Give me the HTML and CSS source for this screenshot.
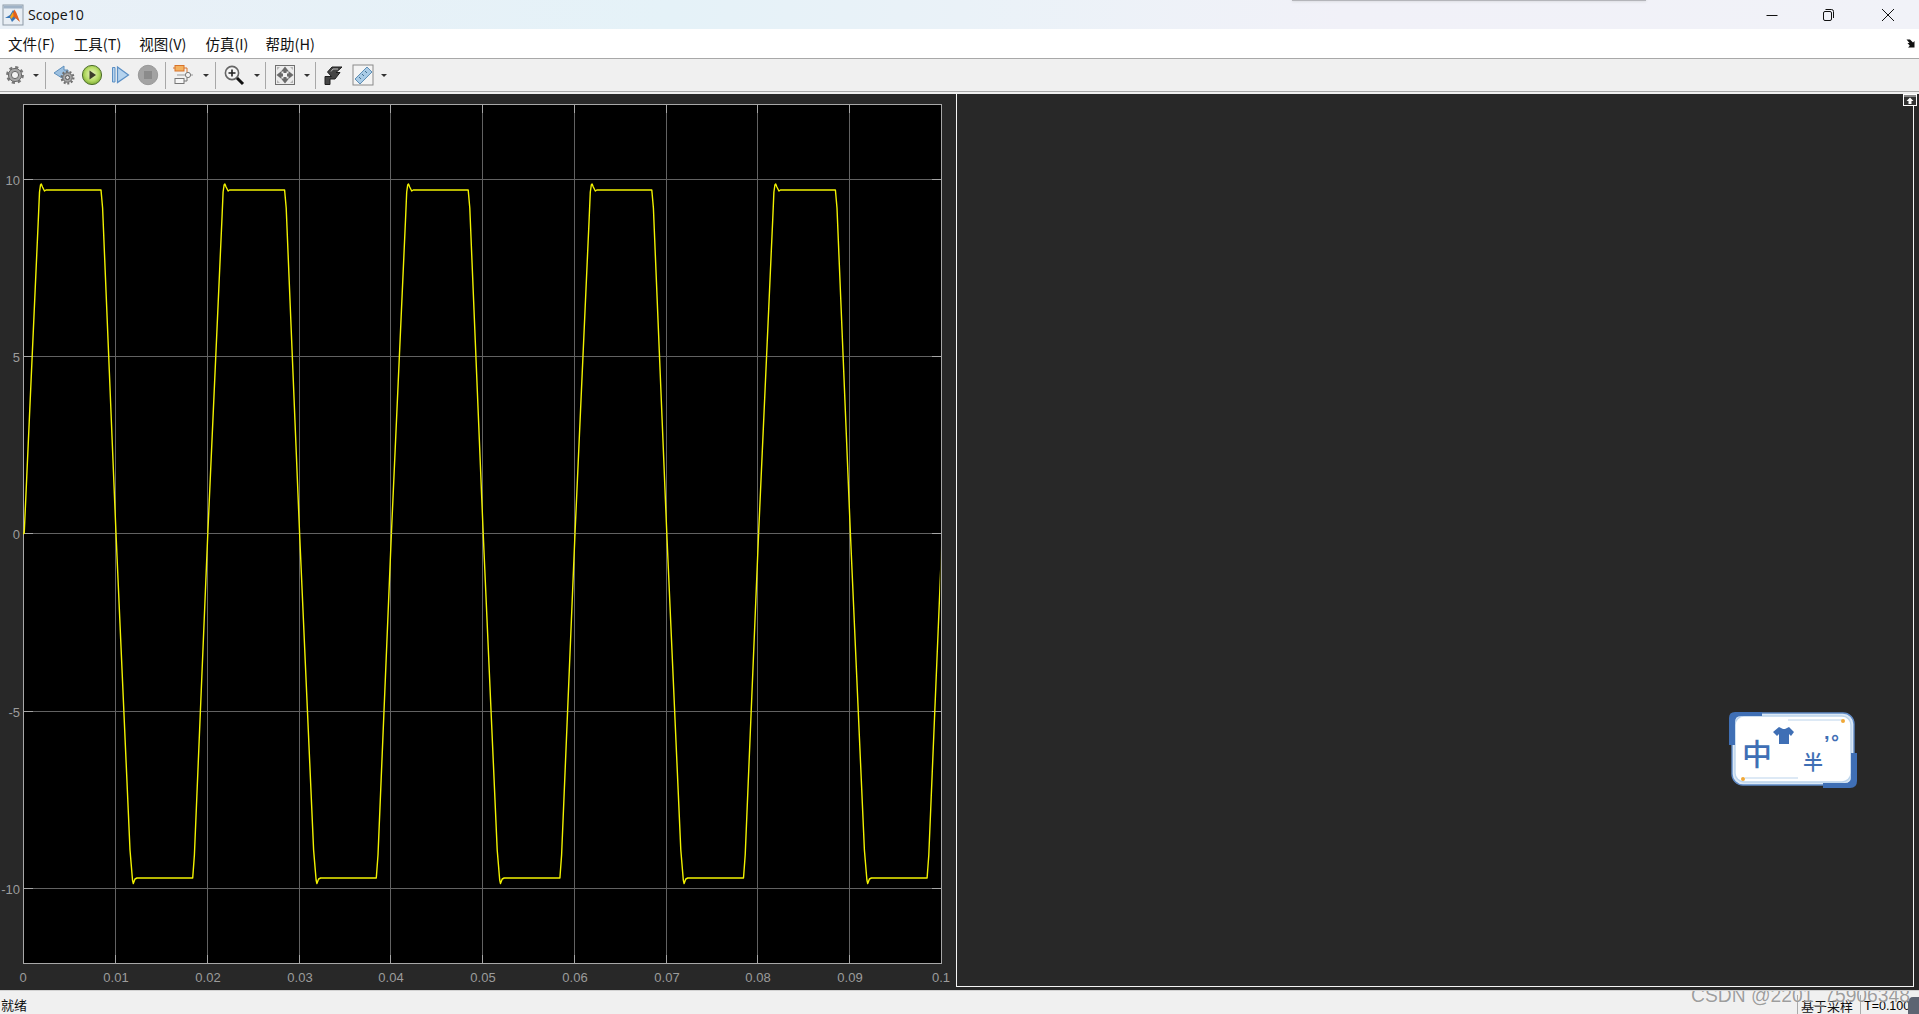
FILE: index.html
```html
<!DOCTYPE html>
<html lang="zh">
<head>
<meta charset="utf-8">
<title>Scope10</title>
<link rel="stylesheet" href="styles.css">
</head>
<body>
<div class="window">
  <header class="titlebar">
    <svg class="app-icon" viewBox="0 0 22 22" width="22" height="22">
      <rect x="1" y="1" width="20" height="20" fill="#e8eef4" stroke="#8d99a6"/>
      <rect x="1.5" y="1.5" width="19" height="3" fill="#9fb2c6"/>
      <path d="M3 14 L8 11 L11 6 L13 8 L17 17 L14 14 L10 18 L8 14 Z" fill="#3a78b8"/>
      <path d="M10 12 L12.5 5.5 L14.5 9 L18 18 L14 14.5 Z" fill="#e2611b"/>
      <path d="M8 13 L11 8 L11.5 12 L9.5 15 Z" fill="#f3a51d"/>
    </svg>
    <span class="title-text">Scope10</span>
    <div class="winctl">
      <svg class="winbtn" viewBox="0 0 14 14" width="14" height="14"><path d="M1.5 7.5 H12.5" stroke="#111" fill="none"/></svg>
      <svg class="winbtn" viewBox="0 0 14 14" width="14" height="14"><rect x="2.5" y="3.5" width="8" height="9" rx="1.5" fill="none" stroke="#111"/><path d="M4.5 1.5 H10.5 Q12.5 1.5 12.5 3.5 V10" fill="none" stroke="#111"/></svg>
      <svg class="winbtn winbtn-close" viewBox="0 0 14 14" width="14" height="14"><path d="M1 1 L13 13 M13 1 L1 13" stroke="#111" fill="none"/></svg>
    </div>
    <div class="foreign-shadow"></div>
  </header>

  <nav class="menubar">
    <span class="menu-item">文件(F)</span>
    <span class="menu-item">工具(T)</span>
    <span class="menu-item">视图(V)</span>
    <span class="menu-item">仿真(I)</span>
    <span class="menu-item">帮助(H)</span>
    <svg class="dock-arrow" viewBox="0 0 10 10" width="10" height="10"><path d="M0.5 1.5 H4 L7 4.5 L8.5 3 V9.5 H2 L3.8 7.8 L1.5 5 H3.5 Z" fill="#111"/></svg>
  </nav>

  <div class="toolbar">
    <div class="group g-first">
      <span class="tool tool-gear"><svg viewBox="0 0 20 20" width="20" height="20"><circle cx="10" cy="10" r="7.8" fill="none" stroke="#777" stroke-width="2.2" stroke-dasharray="3.2 2.92"/><circle cx="10" cy="10" r="6.6" fill="#a6a6a6" stroke="#6a6a6a"/><circle cx="10" cy="10" r="3.6" fill="#f2f2f2" stroke="#666"/></svg></span>
      <span class="drop drop-wide"></span>
    </div>
    <span class="sep"></span>
    <div class="group g-run">
      <span class="tool"><svg viewBox="0 0 22 22" width="22" height="22"><path d="M1 9 L11 2 V6 L15 6 V14 L9 14 Z" fill="#9cc0e0" stroke="#5f8fbb"/><circle cx="14.5" cy="13.5" r="6" fill="none" stroke="#6f6f6f" stroke-width="2" stroke-dasharray="2 1.7"/><circle cx="14.5" cy="13.5" r="4.8" fill="#a5a5a5" stroke="#666"/><circle cx="14.5" cy="13.5" r="2" fill="#ddd" stroke="#555"/></svg></span>
      <span class="tool"><svg viewBox="0 0 22 22" width="22" height="22"><defs><radialGradient id="go" cx="50%" cy="45%" r="60%"><stop offset="0" stop-color="#eef7c8"/><stop offset="0.6" stop-color="#b4da63"/><stop offset="1" stop-color="#6f9f2a"/></radialGradient></defs><circle cx="11" cy="11" r="9.6" fill="url(#go)" stroke="#4f6f2d"/><path d="M8.5 6.5 L15 11 L8.5 15.5 Z" fill="#3d3d2a"/></svg></span>
      <span class="tool"><svg viewBox="0 0 22 22" width="22" height="22"><path d="M3.5 3.5 H6 V18 H3.5 Z" fill="#b5d3ee" stroke="#5b8fc4"/><path d="M8.5 3 L19.5 11 L8.5 18.5 Z" fill="#b5d3ee" stroke="#5b8fc4" stroke-width="1.2"/></svg></span>
      <span class="tool"><svg viewBox="0 0 22 22" width="22" height="22"><circle cx="11" cy="11" r="9.7" fill="#a3a3a3" stroke="#999"/><rect x="7" y="7" width="8" height="8" fill="#8b8b8b"/></svg></span>
    </div>
    <span class="sep"></span>
    <div class="group g-model">
      <span class="tool"><svg viewBox="0 0 22 22" width="22" height="22"><rect x="3" y="1.5" width="9" height="5.5" fill="#f3b15f" stroke="#d8732a"/><path d="M12 4 H15 V8.5" fill="none" stroke="#d8732a"/><path d="M1 4 H3" stroke="#d8732a"/><rect x="3" y="14.5" width="9" height="5" fill="#f6f6f6" stroke="#777"/><path d="M12 17 H15 V13.5" fill="none" stroke="#777"/><circle cx="16" cy="11" r="2.6" fill="#f4f4f4" stroke="#777"/><path d="M5 11 H13.4 M19 11 H21" fill="none" stroke="#999"/></svg></span>
      <span class="drop drop-wide"></span>
    </div>
    <span class="sep"></span>
    <div class="group g-zoom">
      <span class="tool"><svg viewBox="0 0 22 22" width="22" height="22"><circle cx="9" cy="9" r="6.6" fill="#f5f5f5" stroke="#666" stroke-width="1.6"/><path d="M5.5 9 H12.5 M9 5.5 V12.5" stroke="#222" stroke-width="1.6"/><path d="M14 14 L20 20" stroke="#111" stroke-width="3"/></svg></span>
      <span class="drop"></span>
    </div>
    <span class="sep"></span>
    <div class="group g-fit">
      <span class="tool"><svg viewBox="0 0 22 22" width="22" height="22"><rect x="1.5" y="1.5" width="19" height="19" fill="#ececec" stroke="#6f6f6f"/><path d="M11 2.5 L15 7.5 H12.5 V9 H9.5 V7.5 H7 Z M11 19.5 L15 14.5 H12.5 V13 H9.5 V14.5 H7 Z M2.5 11 L7.5 7 V9.5 H9 V12.5 H7.5 V15 Z M19.5 11 L14.5 7 V9.5 H13 V12.5 H14.5 V15 Z" fill="#6a6a6a"/><path d="M3 3 H6 L3 6 Z M19 3 H16 L19 6 Z M3 19 H6 L3 16 Z M19 19 H16 L19 16 Z" fill="#b5b5b5"/><rect x="9" y="9" width="4" height="4" fill="#f2f2f2"/></svg></span>
      <span class="drop drop-narrow"></span>
    </div>
    <span class="sep"></span>
    <div class="group g-last">
      <span class="tool"><svg viewBox="0 0 22 22" width="22" height="22"><path d="M3 20.5 V12.5 H9.5 L5.5 8 L10 3 H20 L14 8.5 H18 L13 15 H8 V20.5 Z" fill="#454545" stroke="#1e1e1e"/><path d="M9 7.5 L11 5 H16" fill="none" stroke="#bdbdbd"/></svg></span>
      <span class="tool tool-ruler"><svg viewBox="0 0 22 22" width="22" height="22"><rect x="1" y="1" width="20" height="20" fill="#f4f4f4" stroke="#8a8a8a"/><path d="M3 15 L15 3 L20 8 L8 20 Z" fill="#a9cbe6" stroke="#5f8fb5"/><path d="M7 13 L9 15 M10 10 L12 12 M13 7 L15 9" stroke="#44708f"/></svg></span>
      <span class="drop drop-tail"></span>
    </div>
  </div>

  <main class="scope">
    <svg class="plot" viewBox="0 94 956 896" width="956" height="896">
      <defs>
        <clipPath id="axes"><rect x="23" y="104" width="917.2" height="860"/></clipPath>
        <path id="period" d="M24.2 533.5 L38.3 220 L39.5 192 L40.5 185 L41.3 184 L42.5 187 L44.5 191 L46 190 L101 190 L102.6 208 L116 533.5 L130 850 L132.5 880 L133.3 883.5 L135 879 L137 878 L192.7 878 L194.4 855 L207.8 533.5"/>
      </defs>
      <rect class="axes-bg" x="23.5" y="104.5" width="918" height="859"/>
      <path class="grid" d="M115.5 104V964 M207.5 104V964 M299.5 104V964 M390.5 104V964 M482.5 104V964 M574.5 104V964 M666.5 104V964 M757.5 104V964 M849.5 104V964 M23 179.5H942 M23 356.5H942 M23 533.5H942 M23 711.5H942 M23 888.5H942"/>
      <path class="ticks" d="M115.5 104v9 M207.5 104v9 M299.5 104v9 M390.5 104v9 M482.5 104v9 M574.5 104v9 M666.5 104v9 M757.5 104v9 M849.5 104v9 M115.5 964v-9 M207.5 964v-9 M299.5 964v-9 M390.5 964v-9 M482.5 964v-9 M574.5 964v-9 M666.5 964v-9 M757.5 964v-9 M849.5 964v-9 M23 179.5h10 M23 356.5h10 M23 533.5h10 M23 711.5h10 M23 888.5h10 M942 179.5h-10 M942 356.5h-10 M942 533.5h-10 M942 711.5h-10 M942 888.5h-10"/>
      <rect class="axes-frame" x="23.5" y="104.5" width="918" height="859"/>
      <g clip-path="url(#axes)">
        <path class="wave" d="M23 533.5 H24.2"/>
        <use class="wave" href="#period"/>
        <use class="wave" href="#period" x="183.6"/>
        <use class="wave" href="#period" x="367.2"/>
        <use class="wave" href="#period" x="550.8"/>
        <use class="wave" href="#period" x="734.4"/>
      </g>
      <text class="ylabel" x="20" y="185">10</text>
      <text class="ylabel" x="20" y="362">5</text>
      <text class="ylabel" x="20" y="539">0</text>
      <text class="ylabel" x="20" y="717">-5</text>
      <text class="ylabel" x="20" y="894">-10</text>
      <text class="xlabel" x="23" y="982">0</text>
      <text class="xlabel" x="116" y="982">0.01</text>
      <text class="xlabel" x="208" y="982">0.02</text>
      <text class="xlabel" x="300" y="982">0.03</text>
      <text class="xlabel" x="391" y="982">0.04</text>
      <text class="xlabel" x="483" y="982">0.05</text>
      <text class="xlabel" x="575" y="982">0.06</text>
      <text class="xlabel" x="667" y="982">0.07</text>
      <text class="xlabel" x="758" y="982">0.08</text>
      <text class="xlabel" x="850" y="982">0.09</text>
      <text class="xlabel" x="941" y="982">0.1</text>
    </svg>
    <section class="side-panel"></section>
    <svg class="undock" viewBox="0 0 14 12" width="14" height="12"><rect x="0.5" y="0.5" width="13" height="11" fill="#333" stroke="#fff"/><rect x="1" y="1" width="12" height="2" fill="#888"/><path d="M7 3.5 L10.5 7 H8.5 V10 H5.5 V7 H3.5 Z" fill="#fff"/></svg>
    <svg class="ime-badge" viewBox="0 0 128 77" width="128" height="77">
      <rect x="3" y="2" width="122" height="72" rx="11" fill="#dbe8f5" stroke="#5f8ac6" stroke-width="1.4"/>
      <rect x="6" y="5" width="116" height="66" rx="9" fill="#fff" stroke="#bcd4ec" stroke-width="1.4"/>
      <path d="M0 34 V7 Q0 1 6 1 H33 V5 H12 Q6 5 6 11 V34 Z" class="ime-accent"/>
      <path d="M128 42 V70 Q128 77 121 77 H94 V72 H116 Q122 72 122 66 V42 Z" class="ime-accent"/>
      <path d="M59 9 H113 M16 67 H69" class="ime-rule"/>
      <circle cx="114" cy="10" r="2" class="ime-dot"/>
      <circle cx="14" cy="68" r="2" class="ime-dot"/>
      <path d="M50 16 L54 18 H56 L60 16 L65 21 L62 25 L60 23 V33 H50 V23 L48 25 L44 21 Z" class="ime-fill"/>
      <text class="ime-big" x="28" y="54">中</text>
      <text class="ime-small" x="84" y="59">半</text>
      <text class="ime-mark" x="95" y="28">,</text>
      <text class="ime-mark" x="102" y="38">°</text>
    </svg>
  </main>

  <footer class="statusbar">
    <span class="status-text">就绪</span>
    <div class="status-cells">
      <span class="cell cell-mode">基于采样</span>
      <span class="cell cell-time">T=0.100</span>
    </div>
    <span class="grip"></span>
    <span class="watermark">CSDN @2201_75906348</span>
  </footer>
</div>
</body>
</html>
```

FILE: styles.css
```css
* { box-sizing: border-box; }
html, body { margin: 0; height: 100%; overflow: hidden; }
body { font-family: "Liberation Sans", "Noto Sans CJK SC", sans-serif; background: #f0f0f0; }
.window { display: flex; flex-direction: column; height: 100vh; }

.titlebar {
  position: relative;
  flex: 0 0 29px;
  display: flex;
  align-items: center;
  padding-left: 2px;
  background: linear-gradient(90deg, #e9f0f7 0%, #e5f2f8 35%, #eaf2f8 50%, #f1f1f8 70%, #f1f2f8 100%);
}
.app-icon { margin-right: 4px; }
.title-text { font: 14.2px "Open Sans", sans-serif; color: #111; }
.winctl { margin-left: auto; display: flex; gap: 42px; padding-right: 24px; }
.winbtn-close { margin-left: 4px; }
.foreign-shadow {
  position: absolute; left: 1292px; top: 0; width: 354px; height: 1px;
  background: #b4b5ba; box-shadow: 0 0 3px #b4b5ba;
}

.menubar {
  flex: 0 0 30px;
  display: flex;
  align-items: center;
  padding: 0 3px 1px 8px;
  background: #fff;
  border-bottom: 1px solid #a8a8a8;
  font: 14.5px "Noto Sans CJK SC", sans-serif;
  color: #111;
}
.menu-item { margin-right: 19px; }
.menu-item:nth-child(2) { margin-right: 18px; }
.menu-item:nth-child(4) { margin-right: 17px; }
.dock-arrow { margin-left: auto; }

.toolbar {
  flex: 0 0 33px;
  margin-bottom: 2px;
  display: flex;
  align-items: center;
  background: #f0f0f0;
  border-bottom: 1px solid #a8a8a8;
}
.group { display: flex; align-items: center; }
.g-first { padding-left: 3px; }
.g-run { padding: 0 3px 0 4px; }
.g-model { padding-left: 3px; }
.g-zoom { padding-left: 4px; }
.g-fit { padding-left: 5px; }
.g-last { padding-left: 3px; }
.tool { width: 28px; height: 26px; display: flex; align-items: center; justify-content: center; }
.tool-gear { width: 24px; }
.tool-ruler { margin-left: 2px; }
.drop { width: 17px; height: 26px; display: flex; align-items: center; justify-content: center; }
.drop::after { content: ""; width: 0; height: 0; border-style: solid; border-color: #333 transparent transparent; border-width: 3px 3.5px 0; }
.drop-wide { width: 18px; }
.drop-narrow { width: 16px; }
.drop-tail { width: 14px; }
.sep { width: 1px; height: 27px; background: #a8a8a8; }

.scope { position: relative; flex: 1 1 auto; display: flex; background: #282828; min-height: 0; }
.plot { display: block; flex: 0 0 956px; }
.axes-bg { fill: #000; }
.grid { stroke: #626262; stroke-width: 1; fill: none; }
.ticks { stroke: #a6a6a6; stroke-width: 1; fill: none; }
.axes-frame { fill: none; stroke: #a8a8a8; stroke-width: 1; }
.wave { fill: none; stroke: #f2f200; stroke-width: 1.4; stroke-linejoin: round; }
.ylabel, .xlabel { font: 13px "Liberation Sans", sans-serif; fill: #9c9c9c; }
.ylabel { text-anchor: end; }
.xlabel { text-anchor: middle; }

.side-panel {
  flex: 1 1 auto;
  margin: 0 5px 3px 0;
  border: 1px solid #f4f4f4;
  border-top: 0;
  background: #282828;
}
.undock { position: absolute; right: 2px; top: 0; }
.ime-badge { position: absolute; left: 1729px; top: 617px; }
.ime-accent { fill: #3f6fb5; }
.ime-rule { stroke: #bcd4ec; stroke-width: 1.2; fill: none; }
.ime-dot { fill: #f0a838; }
.ime-fill { fill: #3f6fb5; }
.ime-big { font: 500 30px "Noto Sans CJK SC", sans-serif; fill: #3f6fb5; text-anchor: middle; }
.ime-small { font: 500 20px "Noto Sans CJK SC", sans-serif; fill: #3f6fb5; text-anchor: middle; }
.ime-mark { font: bold 20px "Liberation Sans", sans-serif; fill: #3f6fb5; }

.statusbar {
  position: relative;
  flex: 0 0 24px;
  display: flex;
  justify-content: space-between;
  align-items: flex-end;
  overflow: hidden;
  background: #f0f0f0;
  border-top: 1px solid #d2d2d2;
  font: 13px "Noto Sans CJK SC", sans-serif;
  color: #111;
}
.status-text { padding-left: 1px; line-height: 18px; height: 18px; }
.status-cells { display: flex; height: 19px; margin-right: 5px; }
.cell { border-left: 1px solid #aaa; line-height: 22px; white-space: nowrap; }
.cell-mode { width: 63px; padding-left: 3px; }
.cell-time { width: 54px; padding-left: 3px; font: 12.5px/22px "Liberation Sans", sans-serif; color: #000; }
.watermark {
  position: absolute; left: 1691px; top: -6px;
  font: 19.3px/22px "Liberation Sans", sans-serif;
  color: rgba(125,125,125,.75);
  text-shadow: 0 0 1px #fff;
  white-space: nowrap;
}
.grip { position: absolute; left: 1908px; top: 6px; width: 14px; height: 20px; border-radius: 5px 0 0 0; background: #5d6472; }
```
